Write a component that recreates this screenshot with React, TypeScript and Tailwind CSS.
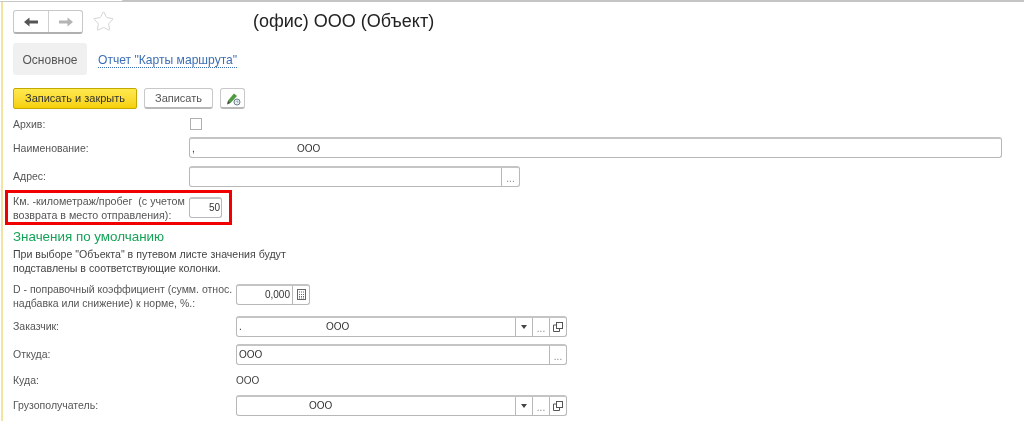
import { Star } from 'lucide-react'

function Field({ className, children }: { className: string; children?: React.ReactNode }) {
  return (
    <div className={`flex h-[21px] items-stretch rounded-[3px] border border-[#b8b8b8] border-t-2 border-t-[#c4c4c4] bg-white text-[10px] text-[#333] ${className}`}>
      {children}
    </div>
  )
}

function Dots({ className = 'w-[17px]' }: { className?: string }) {
  return (
    <div className={`flex shrink-0 items-center justify-center border-l border-[#b8b8b8] pt-[3px] text-[10px] leading-none text-[#888] ${className}`}>
      ...
    </div>
  )
}

function Trio() {
  return (
    <>
      <div className="flex w-[17px] shrink-0 items-center justify-center border-l border-[#b8b8b8]">
        <div className="h-0 w-0 border-x-[3px] border-t-[4px] border-x-transparent border-t-[#444]" />
      </div>
      <Dots />
      <div className="flex w-[17px] shrink-0 items-center justify-center border-l border-[#b8b8b8]">
        <svg width="10" height="10" viewBox="0 0 10 10" fill="none" stroke="#555">
          <rect x="3.5" y="0.5" width="6" height="6" />
          <path d="M3 3H0.5V9.5H6.5V7" />
        </svg>
      </div>
    </>
  )
}

export default function App() {
  return (
    <div className="h-[421px] w-[1024px] overflow-hidden bg-white font-['Liberation_Sans',Arial,sans-serif] text-[10.5px] text-[#555] blur-[0.35px]">
      <div className="flex h-[2px]">
        <div className="h-[2px] w-[123px] border-r border-b border-[#c8c8c8]" />
        <div className="h-[2px] flex-1 bg-[#c4c4c4]" />
      </div>
      <div className="ml-[1px] h-[419px] border-l-2 border-[#f3e3a0] pl-[10px]">
        {/* шапка */}
        <div className="flex h-[41px] items-start pt-[8px]">
          <div className="flex h-[24px] w-[70px] rounded-[3px] border border-[#c8c8c8] border-b-2 border-b-[#b0b0b0] bg-white">
            <div className="flex w-[35px] items-center justify-center border-r border-[#d0d0d0]">
              <svg width="14" height="10" viewBox="0 0 14 10">
                <path d="M0 5L5.5 0.5V3.5H14V6.5H5.5V9.5Z" fill="#555" />
              </svg>
            </div>
            <div className="flex flex-1 items-center justify-center">
              <svg width="14" height="10" viewBox="0 0 14 10">
                <path d="M14 5L8.5 0.5V3.5H0V6.5H8.5V9.5Z" fill="#b4b4b4" />
              </svg>
            </div>
          </div>
          <Star size={23} strokeWidth={1} className="ml-[9px] text-[#d0d0d0]" />
          <div className="ml-[138px] text-[18px] leading-[23px] text-[#222]">(офис) ООО (Объект)</div>
        </div>

        <div className="flex h-[32px] items-center">
          <div className="flex h-[32px] w-[74px] items-center justify-center rounded-[3px] bg-[#f0f0f0] pt-[1px] text-xs text-[#555]">Основное</div>
          <a className="ml-[11px] mt-[4px] border-b border-dotted border-[#3b6fb5] text-[12.1px] leading-[13px] text-[#3b6fb5]">Отчет "Карты маршрута"</a>
        </div>

        {/* кнопки */}
        <div className="mt-[13px] flex h-[21px] items-stretch">
          <div className="flex w-[124px] items-center justify-center rounded-[2px] border border-[#c4a800] bg-gradient-to-b from-[#ffe94d] to-[#f6d000] text-[11px] text-[#333]">Записать и закрыть</div>
          <div className="ml-[7px] flex w-[69px] items-center justify-center rounded-[3px] border border-[#c8c8c8] border-b-2 border-b-[#b8b8b8] text-[11px] text-[#555]">Записать</div>
          <div className="ml-[7px] flex w-[25px] items-center justify-center rounded-[3px] border border-[#c8c8c8] border-b-2 border-b-[#b8b8b8]">
            <svg width="16" height="15" viewBox="0 0 16 15">
              <path d="M3 9.5L9 2.5L12 5L5.5 12Z" fill="#4f9a3c" />
              <path d="M3 9.5L5.5 12L2 13.5Z" fill="#3a4a3a" />
              <circle cx="12" cy="11" r="3" fill="#e8eef2" stroke="#6a7f8c" />
              <path d="M12 9.5V11H13.5" stroke="#6a7f8c" fill="none" strokeWidth="0.7" />
            </svg>
          </div>
        </div>

        {/* форма */}
        <div className="mt-[9px] flex h-[12px] items-center">
          <div className="w-[177px] pt-[1px]">Архив:</div>
          <div className="h-[12px] w-[12px] border border-[#b0b0b0]" />
        </div>

        <div className="mt-[7px] flex h-[21px] items-center">
          <div className="w-[176px] pt-[2px]">Наименование:</div>
          <Field className="w-[813px]">
            <div className="relative flex-1 leading-[20px]">
              <span className="absolute left-[2px]">,</span>
              <span className="absolute left-[107px]">ООО</span>
            </div>
          </Field>
        </div>

        <div className="mt-[8px] flex h-[21px] items-center">
          <div className="w-[176px]">Адрес:</div>
          <Field className="w-[331px]">
            <div className="flex-1" />
            <Dots className="w-[18px]" />
          </Field>
        </div>

        {/* выделенное поле */}
        <div className="-ml-[8px] mt-[3px] flex h-[35px] w-[227px] items-center border-[3px] border-[#f00000] pl-[5px]">
          <div className="w-[176px] whitespace-nowrap text-[10.7px] leading-[14px]">
            Км. -километраж/пробег&nbsp; (с учетом
            <br />
            возврата в место отправления):
          </div>
          <Field className="w-[33px] justify-end pr-[1px]">
            <span className="leading-[18px]">50</span>
          </Field>
        </div>

        <div className="mt-[3px] text-[13.4px] leading-[18px] text-[#14a356]">Значения по умолчанию</div>
        <div className="mt-[1px] text-[10.6px] leading-[14px] text-[#444]">
          При выборе "Объекта" в путевом листе значения будут
          <br />
          подставлены в соответствующие колонки.
        </div>

        <div className="mt-[7px] flex h-[28px] items-center">
          <div className="w-[223px] leading-[14px]">
            D - поправочный коэффициент (сумм. относ.
            <br />
            надбавка или снижение) к норме, %.:
          </div>
          <Field className="-mt-[4px] w-[74px]">
            <div className="flex-1 pr-[2px] text-right leading-[18px]">0,000</div>
            <div className="flex w-[17px] items-center justify-center border-l border-[#b8b8b8]">
              <svg width="9" height="11" viewBox="0 0 9 11" fill="none" stroke="#666">
                <rect x="0.5" y="0.5" width="8" height="10" />
                <path d="M2 3H7M2 5.5H7M2 7.5H7M2 9H7" strokeDasharray="1 1" />
              </svg>
            </div>
          </Field>
        </div>

        <div className="mt-[6px] flex h-[21px] items-center">
          <div className="w-[223px]">Заказчик:</div>
          <Field className="w-[331px]">
            <div className="relative flex-1 leading-[18px]">
              <span className="absolute left-[2px]">.</span>
              <span className="absolute left-[89px]">ООО</span>
            </div>
            <Trio />
          </Field>
        </div>

        <div className="mt-[7px] flex h-[21px] items-center">
          <div className="w-[223px]">Откуда:</div>
          <Field className="w-[331px]">
            <div className="flex-1 pl-[2px] leading-[18px]">ООО</div>
            <Dots />
          </Field>
        </div>

        <div className="mt-[5px] flex h-[21px] items-center">
          <div className="w-[223px]">Куда:</div>
          <div className="text-[10px] text-[#444]">ООО</div>
        </div>

        <div className="mt-[4px] flex h-[21px] items-center">
          <div className="w-[223px]">Грузополучатель:</div>
          <Field className="w-[331px]">
            <div className="relative flex-1 leading-[18px]">
              <span className="absolute left-[72px]">ООО</span>
            </div>
            <Trio />
          </Field>
        </div>
      </div>
    </div>
  )
}
